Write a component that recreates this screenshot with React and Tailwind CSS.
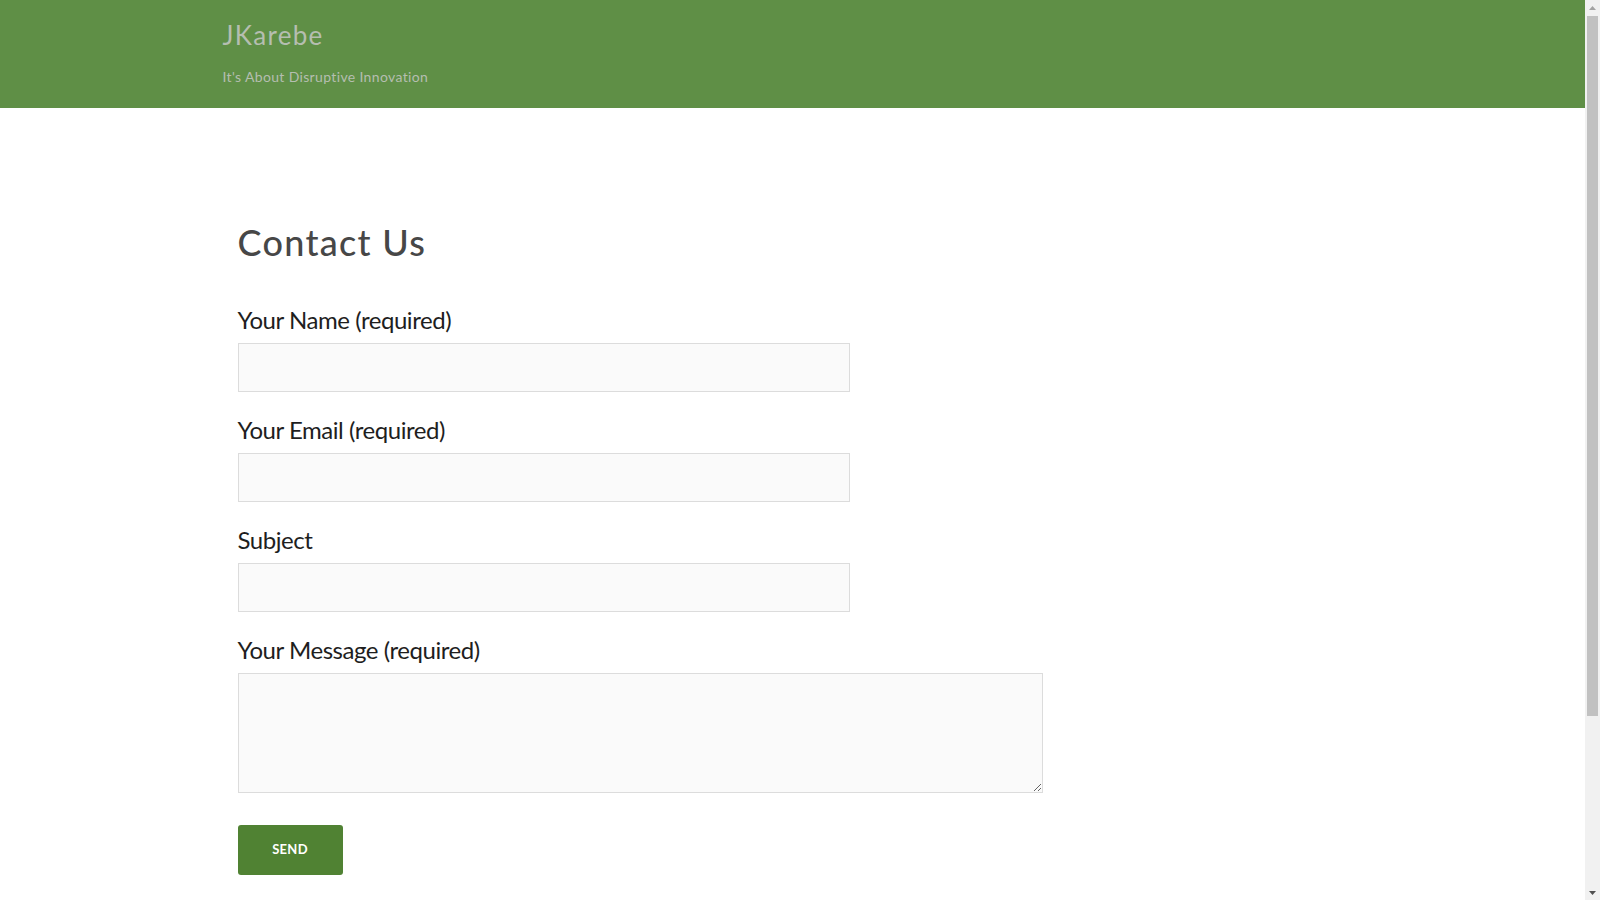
import { useState } from 'react';

function FakeScrollbar() {
  return (
    <div className="fixed top-0 right-0 w-[15px] h-screen bg-[#f1f1f1] flex flex-col items-center">
      <div className="h-[15px] w-full flex items-center justify-center">
        <svg width="7" height="4" viewBox="0 0 7 4"><path d="M0 4 L3.5 0 L7 4 Z" fill="#a3a3a3" /></svg>
      </div>
      <div className="w-[11px] h-[700px] mt-[1px] bg-[#c1c1c1]"></div>
      <div className="flex-1"></div>
      <div className="h-[15px] w-full flex items-center justify-center">
        <svg width="7" height="4" viewBox="0 0 7 4"><path d="M0 0 L3.5 4 L7 0 Z" fill="#505050" /></svg>
      </div>
    </div>
  );
}

function App() {
  const [form, setForm] = useState({ name: '', email: '', subject: '', message: '' });

  const handleChange = (e) => {
    setForm({ ...form, [e.target.name]: e.target.value });
  };

  const handleSubmit = (e) => {
    e.preventDefault();
  };

  const labelCls = "block text-[24px] leading-[36px] text-[#1e1e1e] font-['Lato',sans-serif] tracking-[-0.45px] mb-[5px]";
  const inputCls = "block w-[612px] h-[49px] bg-[#fafafa] border border-[#dcdcdc] px-3 outline-none";

  return (
    <div className="min-h-[1120px] bg-white font-['Lato',sans-serif]">
      <div className="mr-[15px]">
        <header className="h-[108px] bg-[#5f8f46]">
          <div className="w-[1140px] mx-auto pt-[18px]">
            <h1 className="text-[26px] leading-[34px] text-[#b5beb0] tracking-[1.3px]">JKarebe</h1>
            <p className="mt-[15px] text-[14px] leading-[20px] text-[#b5beb0] tracking-[0.35px]">It's About Disruptive Innovation</p>
          </div>
        </header>

        <main className="w-[1140px] mx-auto px-[15px] pt-[112px] pb-[245px]">
          <h2 className="text-[36px] leading-[44px] text-[#474747] font-medium tracking-[1.3px]">Contact Us</h2>

          <form onSubmit={handleSubmit} className="mt-[38px]">
            <div className="mb-[20px]">
              <label className={labelCls}>Your Name (required)</label>
              <input name="name" value={form.name} onChange={handleChange} className={inputCls} />
            </div>
            <div className="mb-[20px]">
              <label className={labelCls}>Your Email (required)</label>
              <input name="email" value={form.email} onChange={handleChange} className={inputCls} />
            </div>
            <div className="mb-[20px]">
              <label className={labelCls}>Subject</label>
              <input name="subject" value={form.subject} onChange={handleChange} className={inputCls} />
            </div>
            <div>
              <label className={labelCls}>Your Message (required)</label>
              <textarea name="message" value={form.message} onChange={handleChange} className="block w-[805px] h-[120px] bg-[#fafafa] border border-[#dcdcdc] px-3 py-2 outline-none resize"></textarea>
            </div>
            <button type="submit" className="mt-[32px] w-[105px] h-[50px] bg-[#508233] rounded-[3px] text-white text-[13px] font-bold tracking-[0.3px]">SEND</button>
          </form>
        </main>
      </div>
      <FakeScrollbar />
    </div>
  );
}

export default App;
